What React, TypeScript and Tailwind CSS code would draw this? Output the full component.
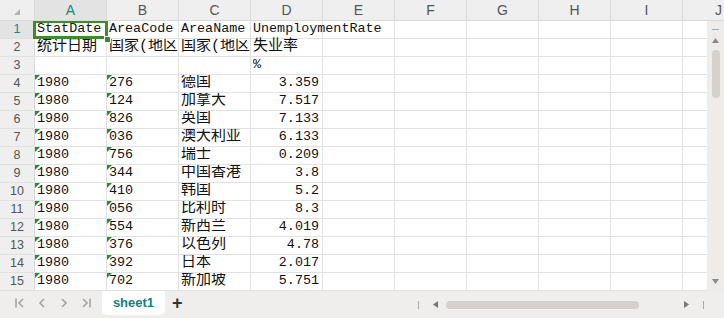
import React from 'react';

const COLS = ['A', 'B', 'C', 'D', 'E', 'F', 'G', 'H', 'I', 'J'];

interface RowData {
  a?: string;
  b?: string;
  c?: string;
  d?: string;
  dAlign?: 'left' | 'right';
  marks?: boolean;
}

const rows: RowData[] = [
  { a: 'StatDate', b: 'AreaCode', c: 'AreaName', d: 'UnemploymentRate', dAlign: 'left' },
  { a: '统计日期', b: '国家(地区', c: '国家(地区', d: '失业率', dAlign: 'left' },
  { d: '%', dAlign: 'left' },
  { a: '1980', b: '276', c: '德国', d: '3.359', marks: true },
  { a: '1980', b: '124', c: '加拿大', d: '7.517', marks: true },
  { a: '1980', b: '826', c: '英国', d: '7.133', marks: true },
  { a: '1980', b: '036', c: '澳大利亚', d: '6.133', marks: true },
  { a: '1980', b: '756', c: '瑞士', d: '0.209', marks: true },
  { a: '1980', b: '344', c: '中国香港', d: '3.8', marks: true },
  { a: '1980', b: '410', c: '韩国', d: '5.2', marks: true },
  { a: '1980', b: '056', c: '比利时', d: '8.3', marks: true },
  { a: '1980', b: '554', c: '新西兰', d: '4.019', marks: true },
  { a: '1980', b: '376', c: '以色列', d: '4.78', marks: true },
  { a: '1980', b: '392', c: '日本', d: '2.017', marks: true },
  { a: '1980', b: '702', c: '新加坡', d: '5.751', marks: true },
];

const hasCjk = (s: string) => /[\u4e00-\u9fff]/.test(s);

// green "number stored as text" marker
const Mark = () => (
  <svg className="absolute left-0 top-0" width="5" height="5" viewBox="0 0 5 5">
    <polygon points="0,0 5,0 0,5" fill="#1f8f3a" />
  </svg>
);

const CellText: React.FC<{ text?: string }> = ({ text }) => {
  if (!text) return null;
  return (
    <span className={hasCjk(text) ? 'text-[15px]' : 'text-[13.4px]'}>{text}</span>
  );
};

const Cell: React.FC<{
  text?: string;
  align?: 'left' | 'right';
  mark?: boolean;
  selected?: boolean;
  spill?: boolean;
}> = ({ text, align = 'left', mark, selected, spill }) => (
  <div
    className={`relative w-[72px] shrink-0 h-full border-r border-[#e1e1e1] flex items-center whitespace-nowrap ${
      align === 'right' ? 'justify-end pr-[3px]' : 'pl-[2px]'
    } ${selected || spill ? 'overflow-visible' : 'overflow-hidden'} ${selected ? 'z-10' : ''}`}
  >
    {mark && <Mark />}
    <CellText text={text} />
    {selected && (
      <>
        <div className="absolute left-[-2px] top-[-1px] w-[75px] h-[19px] border-[3px] border-[#3d8a2f] pointer-events-none" />
        <div className="absolute right-[-5px] bottom-[-5px] w-[7px] h-[7px] bg-[#3d8a2f] border border-white" />
      </>
    )}
  </div>
);

const NavIcon: React.FC<{ kind: 'first' | 'prev' | 'next' | 'last' }> = ({ kind }) => (
  <svg width="12" height="12" viewBox="0 0 12 12" fill="none" stroke="#a3a3a3" strokeWidth="1.6">
    {kind === 'first' && (
      <>
        <path d="M2 1.5v9" />
        <path d="M9 2 5 6l4 4" />
      </>
    )}
    {kind === 'prev' && <path d="M8 2 4 6l4 4" />}
    {kind === 'next' && <path d="M4 2l4 4-4 4" />}
    {kind === 'last' && (
      <>
        <path d="M3 2l4 4-4 4" />
        <path d="M10 1.5v9" />
      </>
    )}
  </svg>
);

export default function App() {
  return (
    <div
      className="w-[724px] h-[318px] bg-white overflow-hidden flex flex-col"
      style={{ fontFamily: '"Liberation Mono", "Noto Sans CJK SC", monospace' }}
    >
      {/* Column headers */}
      <div className="h-[21px] shrink-0 flex bg-[#efefef] border-b border-[#d9d9d9] font-['Liberation_Sans',sans-serif] text-[14px] text-[#555]">
        <div className="w-[35px] shrink-0 border-r border-[#d9d9d9] relative">
          <svg className="absolute left-[14px] top-[9px]" width="6" height="6" viewBox="0 0 6 6">
            <polygon points="6,0 6,6 0,6" fill="#b3b3b3" />
          </svg>
        </div>
        {COLS.map((c, i) => (
          <div
            key={c}
            className={`w-[72px] shrink-0 border-r border-[#d9d9d9] flex items-center justify-center ${
              i === 0 ? 'bg-[#e3e3e3] text-[#16877a]' : ''
            }`}
          >
            {c}
          </div>
        ))}
      </div>

      {/* Sheet body + vertical scrollbar */}
      <div className="h-[270px] shrink-0 flex">
        <div className="flex-1 overflow-hidden">
          {rows.map((r, i) => (
            <div key={i} className="h-[18px] flex border-b border-[#e1e1e1] text-[#111]">
              <div
                className={`w-[35px] shrink-0 border-r border-[#d9d9d9] flex items-center justify-center font-['Liberation_Sans',sans-serif] text-[12.5px] ${
                  i === 0 ? 'bg-[#e3e3e3] text-[#16877a]' : 'bg-[#efefef] text-[#555]'
                }`}
              >
                {i + 1}
              </div>
              <Cell text={r.a} mark={r.marks} selected={i === 0} />
              <Cell text={r.b} mark={r.marks} />
              <Cell text={r.c} />
              <Cell text={r.d} align={r.dAlign ?? 'right'} spill />
              {COLS.slice(4).map((c) => (
                <Cell key={c} />
              ))}
            </div>
          ))}
        </div>
        <div className="w-[17px] shrink-0 bg-[#eeebe9] flex flex-col items-center">
          <div className="mt-[8px] w-[7px] h-[1px] bg-[#a9a9a9]" />
          <svg className="mt-[8px]" width="7" height="5" viewBox="0 0 7 5">
            <polygon points="3.5,0 7,5 0,5" fill="#8a8a8a" />
          </svg>
          <div className="mt-[7px] w-[8px] h-[48px] rounded-full bg-[#d4d1cf]" />
          <svg className="mt-auto mb-[7px]" width="7" height="5" viewBox="0 0 7 5">
            <polygon points="0,0 7,0 3.5,5" fill="#8a8a8a" />
          </svg>
        </div>
      </div>

      {/* Tab bar */}
      <div className="flex-1 bg-[#f0eeec] flex items-start font-['Liberation_Sans',sans-serif]">
        <div className="flex items-center gap-[10px] pl-[14px] h-[24px]">
          <NavIcon kind="first" />
          <NavIcon kind="prev" />
          <NavIcon kind="next" />
          <NavIcon kind="last" />
        </div>
        <div className="ml-[10px] w-[63px] h-[24px] bg-white rounded-b-[5px] flex items-center justify-center text-[13px] font-bold text-[#13807a]">
          sheet1
        </div>
        <div className="ml-[7px] h-[24px] flex items-center text-[18px] font-bold text-[#333] leading-none">+</div>

        <div className="ml-auto h-[27px] flex items-center pr-[20px]">
          <div className="w-[1px] h-[8px] bg-[#aaa]" />
          <svg className="ml-[14px]" width="5" height="7" viewBox="0 0 5 7">
            <polygon points="0,3.5 5,0 5,7" fill="#777" />
          </svg>
          <div className="ml-[8px] w-[193px] h-[8px] rounded-full bg-[#d3d0cd]" />
          <svg className="ml-[45px]" width="5" height="7" viewBox="0 0 5 7">
            <polygon points="5,3.5 0,0 0,7" fill="#777" />
          </svg>
          <div className="ml-[14px] w-[1px] h-[8px] bg-[#aaa]" />
        </div>
      </div>
    </div>
  );
}
